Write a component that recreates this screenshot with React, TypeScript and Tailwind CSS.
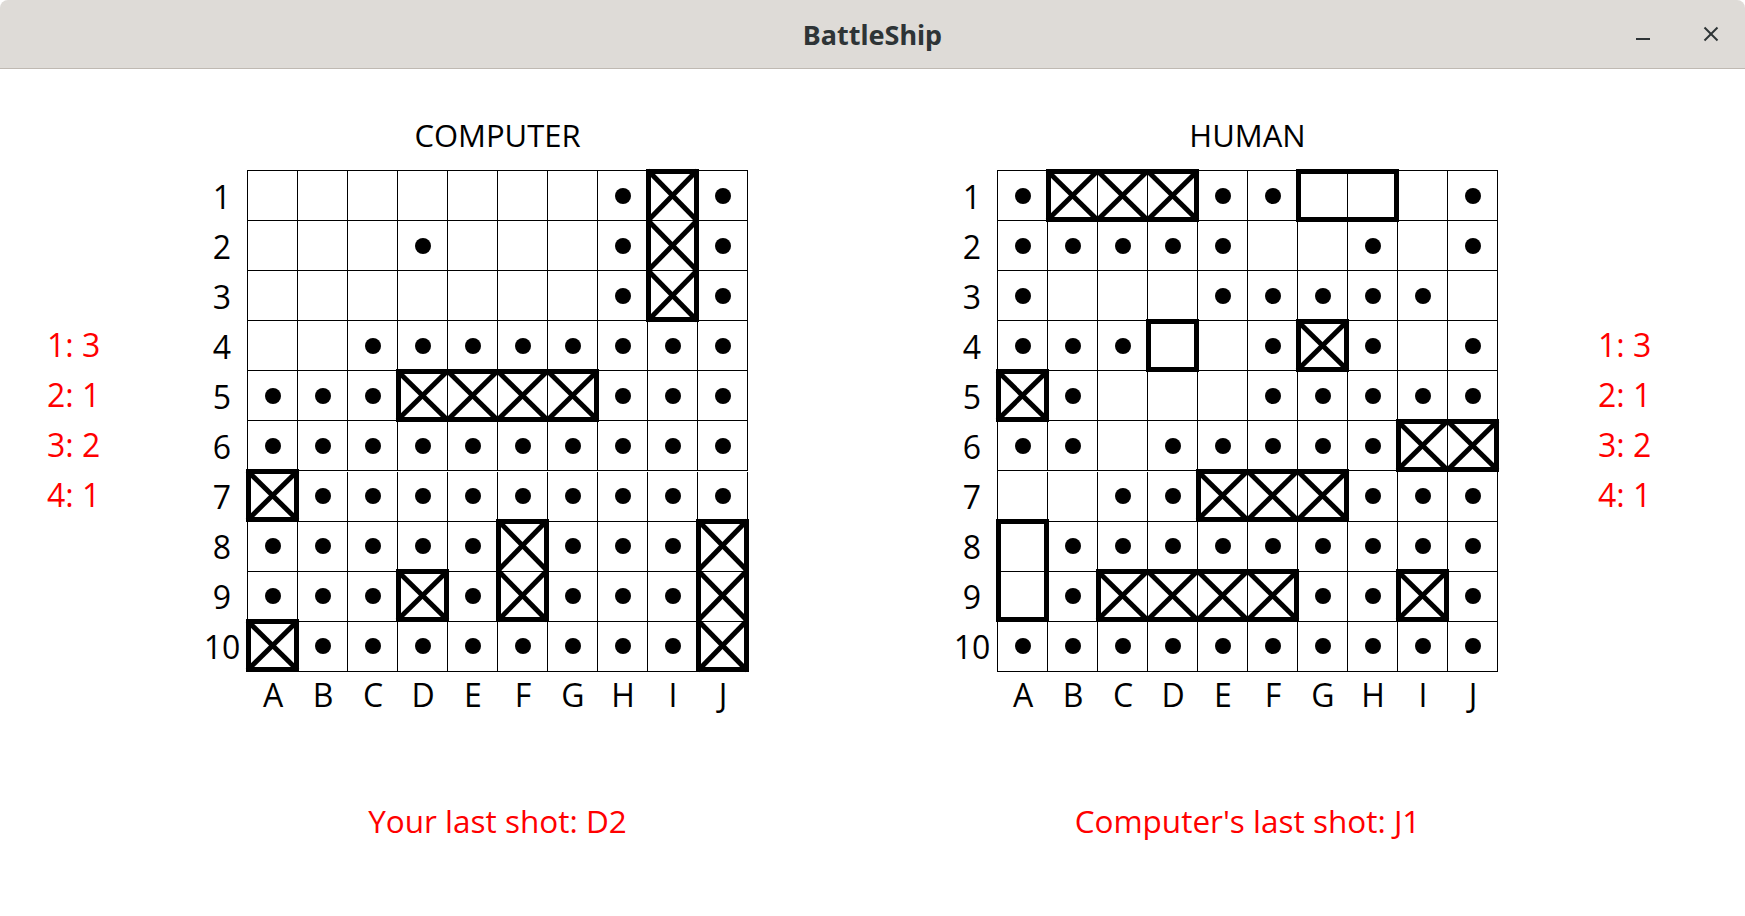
import React from "react";

type Ship = { r: number; c: number; len: number; v?: boolean; hit: boolean };

const COLS = ["A", "B", "C", "D", "E", "F", "G", "H", "I", "J"];

// 'o' = miss (dot), '-' = nothing drawn (ship cells are drawn by the overlay)
const computerShots = [
  "-------o-o",
  "---o---o-o",
  "-------o-o",
  "--oooooooo",
  "ooo----ooo",
  "oooooooooo",
  "-ooooooooo",
  "ooooo-ooo-",
  "ooo-o-ooo-",
  "-oooooooo-",
];

const computerShips: Ship[] = [
  { r: 0, c: 8, len: 3, v: true, hit: true },
  { r: 4, c: 3, len: 4, hit: true },
  { r: 6, c: 0, len: 1, hit: true },
  { r: 7, c: 5, len: 2, v: true, hit: true },
  { r: 7, c: 9, len: 3, v: true, hit: true },
  { r: 8, c: 3, len: 1, hit: true },
  { r: 9, c: 0, len: 1, hit: true },
];

const humanShots = [
  "o---oo---o",
  "ooooo--o-o",
  "o---ooooo-",
  "ooo--o-o-o",
  "-o---ooooo",
  "oo-ooooo--",
  "--oo---ooo",
  "-ooooooooo",
  "-o----oo-o",
  "oooooooooo",
];

const humanShips: Ship[] = [
  { r: 0, c: 1, len: 3, hit: true },
  { r: 0, c: 6, len: 2, hit: false },
  { r: 3, c: 3, len: 1, hit: false },
  { r: 3, c: 6, len: 1, hit: true },
  { r: 4, c: 0, len: 1, hit: true },
  { r: 5, c: 8, len: 2, hit: true },
  { r: 6, c: 4, len: 3, hit: true },
  { r: 7, c: 0, len: 2, v: true, hit: false },
  { r: 8, c: 2, len: 4, hit: true },
  { r: 8, c: 8, len: 1, hit: true },
];

const counts = ["1: 3", "2: 1", "3: 2", "4: 1"];

function ShipMark({ ship }: { ship: Ship }) {
  const long = ship.len * 50 + 3;
  const w = ship.v ? 53 : long;
  const h = ship.v ? long : 53;
  const cells = Array.from({ length: ship.len }, (_, i) => i);
  return (
    <svg
      className="absolute overflow-visible pointer-events-none"
      style={{ left: ship.c * 50 - 2, top: ship.r * 50 - 2 }}
      width={w}
      height={h}
    >
      <rect x={2.5} y={2.5} width={w - 5} height={h - 5} fill="none" stroke="#000" strokeWidth={5} />
      {ship.hit &&
        cells.map((i) => {
          const a = 1.5 + 50 * i;
          const b = 1.5 + 50 * (i + 1);
          if (ship.v) {
            return (
              <g key={i} stroke="#000" strokeWidth={5}>
                <line x1={2} y1={a} x2={w - 2} y2={b} />
                <line x1={w - 2} y1={a} x2={2} y2={b} />
              </g>
            );
          }
          return (
            <g key={i} stroke="#000" strokeWidth={5}>
              <line x1={a} y1={2} x2={b} y2={h - 2} />
              <line x1={b} y1={2} x2={a} y2={h - 2} />
            </g>
          );
        })}
    </svg>
  );
}

function Board({ shots, ships }: { shots: string[]; ships: Ship[] }) {
  return (
    <div className="relative grid grid-cols-[repeat(10,50px)] border-l border-t border-black">
      {shots.flatMap((row, r) =>
        row.split("").map((ch, c) => (
          <div
            key={`${r}-${c}`}
            className="w-[50px] h-[50px] border-r border-b border-black flex items-center justify-center"
          >
            {ch === "o" && <span className="block w-[16px] h-[16px] rounded-full bg-black" />}
          </div>
        ))
      )}
      {ships.map((s, i) => (
        <ShipMark key={i} ship={s} />
      ))}
    </div>
  );
}

function Section({ title, shots, ships, footer }: { title: string; shots: string[]; ships: Ship[]; footer: string }) {
  return (
    <div className="w-[551px] flex flex-col">
      <div className="mt-[46px] pl-[50px] h-[40px] leading-[40px] text-center text-[31px] text-black">{title}</div>
      <div className="mt-[15px] flex">
        <div className="w-[50px] pt-[2px] flex flex-col">
          {shots.map((_, i) => (
            <div key={i} className="h-[50px] leading-[50px] text-center text-black">
              {i + 1}
            </div>
          ))}
        </div>
        <Board shots={shots} ships={ships} />
      </div>
      <div className="-mt-[2px] pl-[51px] flex h-[50px]">
        {COLS.map((l) => (
          <div key={l} className="w-[50px] leading-[50px] text-center text-black">
            {l}
          </div>
        ))}
      </div>
      <div className="mt-[76px] pl-[50px] h-[50px] leading-[50px] text-center whitespace-nowrap text-[31.5px] text-[#ff0000]">
        {footer}
      </div>
    </div>
  );
}

function Counts() {
  return (
    <div className="flex flex-col text-[#ff0000]">
      {counts.map((c) => (
        <div key={c} className="h-[50px] leading-[50px] whitespace-nowrap">
          {c}
        </div>
      ))}
    </div>
  );
}

export default function App() {
  return (
    <div className="w-[1745px] h-[916px] bg-white overflow-hidden flex flex-col">
      <header className="h-[69px] shrink-0 grid grid-cols-[1fr_auto_1fr] items-center bg-[#dedbd7] border-b border-[#bfb9b2] rounded-t-[8px]">
        <div />
        <div className="font-['Noto_Sans',sans-serif] font-bold text-[27px] text-[#2e3436] leading-none">
          BattleShip
        </div>
        <div className="flex justify-end items-center pr-[26px] gap-[53px] text-[#2e3436]">
          <svg width="14" height="16" viewBox="0 0 14 16">
            <line x1="0" y1="13" x2="14" y2="13" stroke="currentColor" strokeWidth="2" />
          </svg>
          <svg width="16" height="16" viewBox="0 0 16 16">
            <line x1="1.5" y1="1.5" x2="14.5" y2="14.5" stroke="currentColor" strokeWidth="2" />
            <line x1="14.5" y1="1.5" x2="1.5" y2="14.5" stroke="currentColor" strokeWidth="2" />
          </svg>
        </div>
      </header>
      <main className="flex font-['Open_Sans',sans-serif] text-[32px]">
        <div className="w-[197px] pl-[47px] pt-[251px]">
          <Counts />
        </div>
        <Section title="COMPUTER" shots={computerShots} ships={computerShips} footer="Your last shot: D2" />
        <div className="w-[199px]" />
        <Section title="HUMAN" shots={humanShots} ships={humanShips} footer="Computer's last shot: J1" />
        <div className="pl-[100px] pt-[251px]">
          <Counts />
        </div>
      </main>
    </div>
  );
}
